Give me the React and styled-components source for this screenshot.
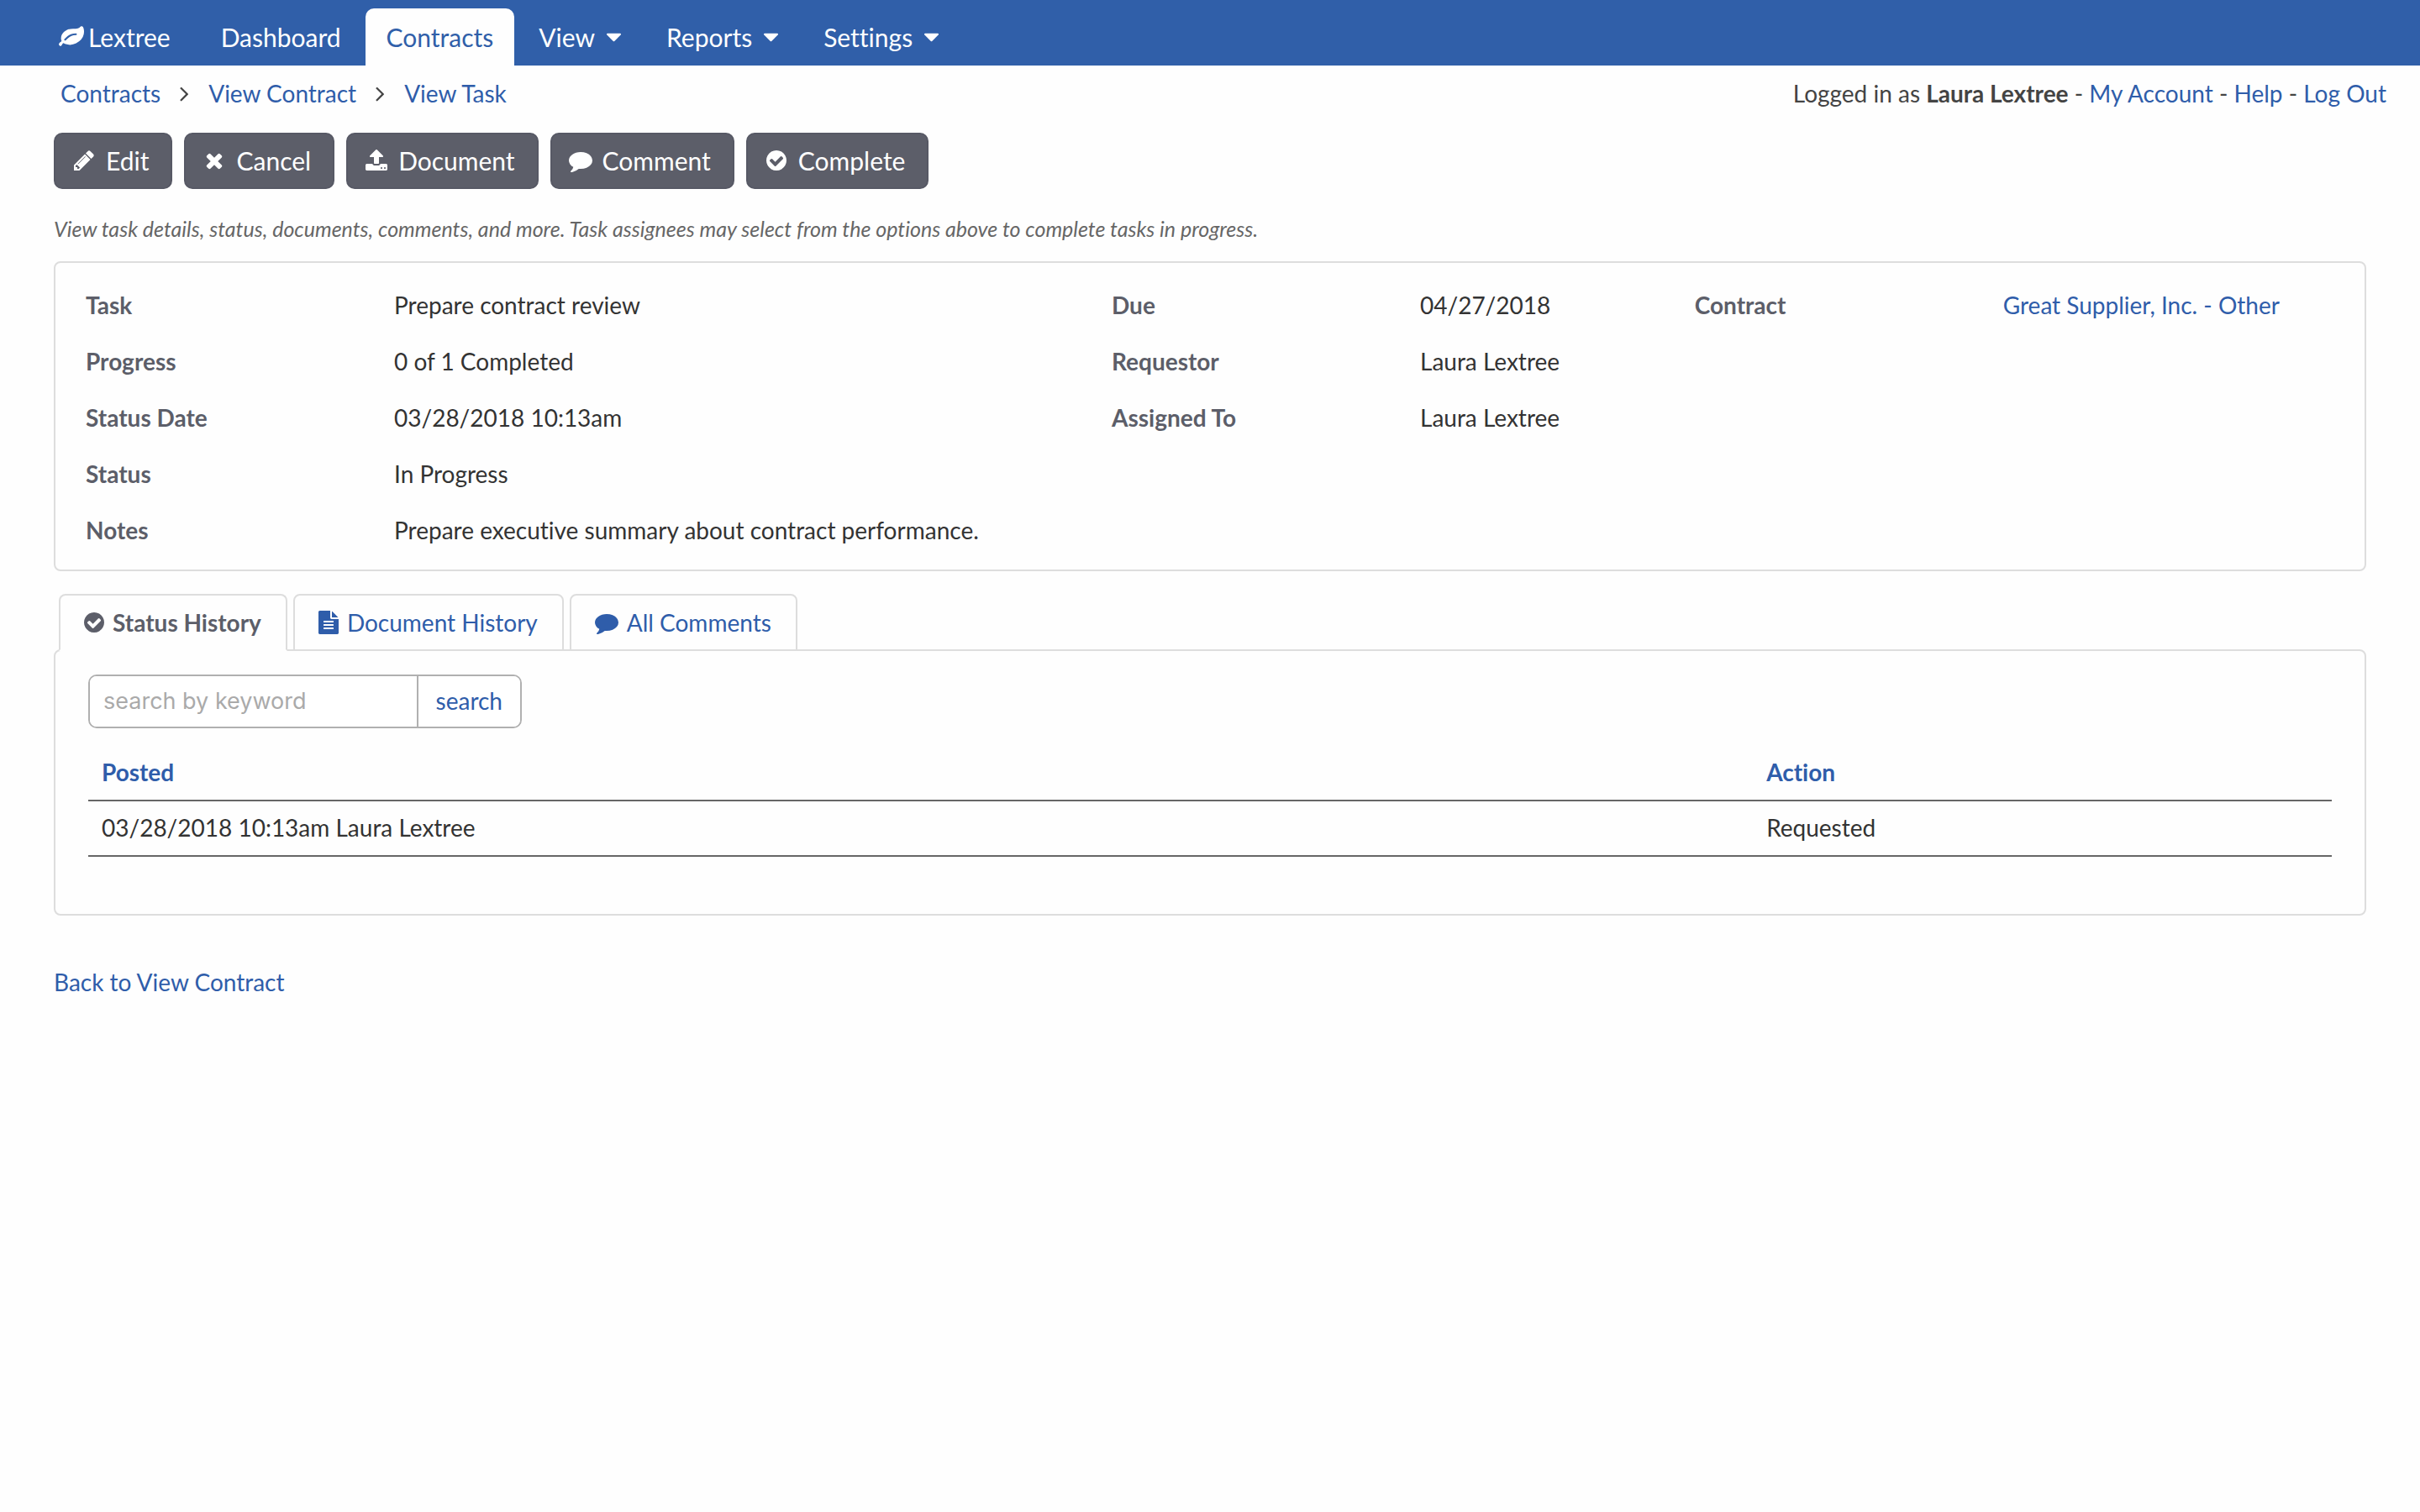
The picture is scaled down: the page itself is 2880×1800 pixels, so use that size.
import React, { useState } from "react";
import styled, { createGlobalStyle, css } from "styled-components";

const GlobalStyle = createGlobalStyle`
  * {
    box-sizing: border-box;
  }

  body {
    margin: 0;
    background: #fefefe;
    color: #333;
    font-family: Lato, "Liberation Sans", sans-serif;
    font-size: 28px;
    line-height: 34px;
    font-variant-ligatures: none;
  }

  button, input {
    font: inherit;
    font-variant-ligatures: none;
  }
`;

// w is the advance width of the glyph on the 1792 unit grid
const icons = {
  leaf: {
    w: 1792,
    d: "M1280 704q0-26-19-45t-45-19q-172 0-318 49.5t-259.5 134-235.5 219.5q-19 21-19 45 0 26 19 45t45 19q24 0 45-19 27-24 74-71t67-66q137-124 268.5-176t313.5-52q26 0 45-19t19-45zm512-198q0 95-20 193-46 224-184.5 383t-357.5 268q-214 108-438 108-148 0-286-47-15-5-88-42t-96-37q-16 0-39.5 32t-45 70-52.5 70-60 32q-43 0-63.5-17.5t-45.5-59.5q-2-4-6-11t-5.5-10-3-9.5-1.5-13.5q0-35 31-73.5t68-65.5 68-56 31-48q0-4-14-38t-16-44q-9-51-9-104 0-115 43.5-220t119-184.5 170.5-139 204-95.5q55-18 145-25.5t179.5-9 178.5-6 163.5-24 113.5-56.5l29.5-29.5 29.5-28 27-20 36.5-16 43.5-4.5q39 0 70.5 46t47.5 112 24 124 8 96z",
  },
  pencil: {
    w: 1536,
    d: "M491 1536l91-91-235-235-91 91v107h128v128h107zm523-928q0-22-22-22-10 0-17 7l-542 542q-7 7-7 17 0 22 22 22 10 0 17-7l542-542q7-7 7-17zm-54-192l416 416-832 832h-416v-416zm683 96q0 53-37 90l-166 166-416-416 166-165q36-38 90-38 53 0 91 38l235 234q37 39 37 91z",
  },
  times: {
    w: 1408,
    d: "M1490 1322q0 40-28 68l-136 136q-28 28-68 28t-68-28l-294-294-294 294q-28 28-68 28t-68-28l-136-136q-28-28-28-68t28-68l294-294-294-294q-28-28-28-68t28-68l136-136q28-28 68-28t68 28l294 294 294-294q28-28 68-28t68 28l136 136q28 28 28 68t-28 68l-294 294 294 294q28 28 28 68z",
  },
  upload: {
    w: 1664,
    d: "M1344 1472q0-26-19-45t-45-19-45 19-19 45 19 45 45 19 45-19 19-45zm256 0q0-26-19-45t-45-19-45 19-19 45 19 45 45 19 45-19 19-45zm128-224v320q0 40-28 68t-68 28h-1472q-40 0-68-28t-28-68v-320q0-40 28-68t68-28h427q21 56 70.5 92t110.5 36h256q61 0 110.5-36t70.5-92h427q40 0 68 28t28 68zm-325-648q-17 40-59 40h-256v448q0 26-19 45t-45 19h-256q-26 0-45-19t-19-45v-448h-256q-42 0-59-40-17-39 14-69l448-448q18-19 45-19t45 19l448 448q31 30 14 69z",
  },
  comment: {
    w: 1792,
    d: "M1792 896q0 174-120 321.5t-326 233-450 85.5q-70 0-145-8-198 175-460 242-49 14-114 22-17 2-30.5-9t-17.5-29v-1q-3-4-.5-12t2-10 4.5-9.5l6-9 7-8.5 8-9q7-8 31-34.5t34.5-38 31-39.5 32.5-51 27-59 26-76q-157-89-247.5-220t-90.5-281q0-130 71-248.5t191-204.5 286-136.5 348-50.5q244 0 450 85.5t326 233 120 321.5z",
  },
  check: {
    w: 1536,
    d: "M1412 734q0-28-18-46l-91-90q-19-19-45-19t-45 19l-408 407-226-226q-19-19-45-19t-45 19l-91 90q-18 18-18 46 0 27 18 45l362 362q19 19 45 19 27 0 46-19l543-543q18-18 18-45zm252 162q0 209-103 385.5t-279.5 279.5-385.5 103-385.5-103-279.5-279.5-103-385.5 103-385.5 279.5-279.5 385.5-103 385.5 103 279.5 279.5 103 385.5z",
  },
  file: {
    w: 1536,
    d: "M1596 476q14 14 28 36h-472v-472q22 14 36 28zm-476 164h544v1056q0 40-28 68t-68 28h-1344q-40 0-68-28t-28-68v-1600q0-40 28-68t68-28h800v544q0 40 28 68t68 28zm160 736v-64q0-14-9-23t-23-9h-704q-14 0-23 9t-9 23v64q0 14 9 23t23 9h704q14 0 23-9t9-23zm0-256v-64q0-14-9-23t-23-9h-704q-14 0-23 9t-9 23v64q0 14 9 23t23 9h704q14 0 23-9t9-23zm0-256v-64q0-14-9-23t-23-9h-704q-14 0-23 9t-9 23v64q0 14 9 23t23 9h704q14 0 23-9t9-23z",
  },
  caret: {
    w: 1024,
    d: "M1408 704q0 26-19 45l-448 448q-19 19-45 19t-45-19l-448-448q-19-19-19-45t19-45 45-19h896q26 0 45 19t19 45z",
  },
  angle: {
    w: 640,
    d: "M1171 960q0 13-10 23l-466 466q-10 10-23 10t-23-10l-50-50q-10-10-10-23t10-23l393-393-393-393q-10-10-10-23t10-23l50-50q10-10 23-10t23 10l466 466q10 10 10 23z",
  },
};

const Svg = styled.svg`
  display: block;
  flex: none;
  overflow: visible;
  fill: currentColor;
`;

function Icon({ name, size = 28, width }) {
  const { w, d } = icons[name];
  return (
    <Svg
      width={width || Math.round((size * w) / 1792)}
      height={size}
      viewBox={`${(1792 - w) / 2} 0 ${w} 1792`}
      aria-hidden="true"
    >
      <path d={d} />
    </Svg>
  );
}

const Link = styled.a`
  color: #2f5daa;
  text-decoration: none;

  &:hover {
    text-decoration: underline;
  }
`;

const Navbar = styled.nav`
  display: flex;
  align-items: flex-end;
  gap: 4px;
  height: 78px;
  padding-left: 45px;
  background: #305fa9;
`;

const navItem = css`
  display: flex;
  align-items: center;
  height: 68px;
  padding: 0 25px;
  border: 0;
  border-radius: 10px 10px 0 0;
  background: ${(p) => (p.$active ? "#fefefe" : "transparent")};
  color: ${(p) => (p.$active ? "#305fa9" : "#fff")};
  font-size: 30px;
  line-height: 36px;
  text-decoration: none;
  cursor: pointer;
`;

const NavLink = styled.a`
  ${navItem}
`;

const NavMenu = styled.button`
  ${navItem}
  gap: 14px;
`;

const Brand = styled.a`
  ${navItem}
  gap: 5px;
  margin-right: 6px;
`;

const TopRow = styled.div`
  display: flex;
  align-items: center;
  justify-content: space-between;
  padding: 16px 40px 0 72px;
  color: #444;
`;

const Breadcrumbs = styled.div`
  display: flex;
  align-items: center;
  gap: 23px;
`;

const Page = styled.main`
  padding: 0 64px;
`;

const Toolbar = styled.div`
  display: flex;
  gap: 14px;
  margin-top: 30px;
`;

const ToolButton = styled.button`
  display: flex;
  align-items: center;
  gap: 8px;
  height: 67px;
  padding: 0 26px 2px 16px;
  border: 2px solid #575965;
  border-radius: 10px;
  background: #5c5e69;
  color: #fff;
  font-size: 30px;
  line-height: 36px;
  cursor: pointer;
`;

const Hint = styled.p`
  margin: 31px 0 23px;
  color: #666;
  font-size: 25px;
  line-height: 32px;
  font-style: italic;
`;

const Card = styled.section`
  border: 2px solid #ddd;
  border-radius: 8px;
`;

const Details = styled(Card)`
  display: grid;
  grid-template-columns: 44fr 25fr 27fr;
  align-items: start;
  padding: 17px 48px 13px 36px;
`;

const Fields = styled.dl`
  display: grid;
  grid-template-columns: 367px 1fr;
  margin: 0;
  line-height: 67px;

  dt {
    color: #5c5e69;
    font-weight: bold;
  }

  dd {
    margin: 0;
  }
`;

const Tabs = styled.div`
  display: flex;
  gap: 7px;
  margin: 27px 0 -2px;
  padding-left: 6px;
`;

const Tab = styled.button`
  display: flex;
  align-items: center;
  gap: 10px;
  height: 68px;
  padding: 0 29px 0 28px;
  border: 2px solid #ddd;
  border-bottom-color: ${(p) => (p.$active ? "#fefefe" : "#ddd")};
  border-radius: 8px 8px 0 0;
  background: #fefefe;
  color: ${(p) => (p.$active ? "#5c5e69" : "#2f5daa")};
  font-weight: ${(p) => (p.$active ? "bold" : "normal")};
  z-index: 1;
  cursor: pointer;
`;

const Panel = styled(Card)`
  padding: 28px 39px 68px;
`;

const SearchForm = styled.form`
  display: flex;
  width: 516px;
  height: 64px;
  border: 2px solid #b0b0b0;
  border-radius: 10px;
  overflow: hidden;
`;

const SearchInput = styled.input`
  flex: 1;
  min-width: 0;
  padding: 0 16px;
  border: 0;
  background: #fff;
  font-family: Inter, "Liberation Sans", sans-serif;
  font-size: 27px;

  &::placeholder {
    color: #aaa;
  }
`;

const SearchButton = styled.button`
  padding: 0 21px 2px;
  border: 0;
  border-left: 2px solid #b0b0b0;
  background: #fff;
  color: #2f5daa;
  cursor: pointer;
`;

const HistoryTable = styled.table`
  width: 100%;
  margin-top: 21px;
  border-spacing: 0;
  table-layout: fixed;

  th, td {
    height: 66px;
    padding: 0 16px 2px;
    border-bottom: 2px solid #666;
    text-align: left;
  }

  th:first-child {
    width: 74.2%;
  }
`;

const BackRow = styled.div`
  margin-top: 62px;
`;

const actions = [
  { icon: "pencil", label: "Edit" },
  { icon: "times", label: "Cancel" },
  { icon: "upload", label: "Document" },
  { icon: "comment", label: "Comment" },
  { icon: "check", label: "Complete" },
];

const tabs = [
  { icon: "check", label: "Status History" },
  { icon: "file", label: "Document History" },
  { icon: "comment", label: "All Comments" },
];

const details = [
  [
    ["Task", "Prepare contract review"],
    ["Progress", "0 of 1 Completed"],
    ["Status Date", "03/28/2018 10:13am"],
    ["Status", "In Progress"],
    ["Notes", "Prepare executive summary about contract performance."],
  ],
  [
    ["Due", "04/27/2018"],
    ["Requestor", "Laura Lextree"],
    ["Assigned To", "Laura Lextree"],
  ],
  [["Contract", <Link href="#supplier">Great Supplier, Inc. - Other</Link>]],
];

function App() {
  const [tab, setTab] = useState("Status History");
  const [keyword, setKeyword] = useState("");

  return (
    <>
      <GlobalStyle />
      <Navbar>
        <Brand href="#home"><Icon name="leaf" size={30} /> Lextree</Brand>
        <NavLink href="#dashboard">Dashboard</NavLink>
        <NavLink href="#contracts" $active>Contracts</NavLink>
        {["View", "Reports", "Settings"].map((label) => (
          <NavMenu type="button" key={label}>
            {label} <Icon name="caret" size={30} />
          </NavMenu>
        ))}
      </Navbar>

      <TopRow>
        <Breadcrumbs>
          <Link href="#contracts">Contracts</Link>
          <Icon name="angle" size={30} />
          <Link href="#contract">View Contract</Link>
          <Icon name="angle" size={30} />
          <Link href="#task">View Task</Link>
        </Breadcrumbs>
        <div>
          Logged in as <strong>Laura Lextree</strong> - <Link href="#account">My Account</Link> -{" "}
          <Link href="#help">Help</Link> - <Link href="#logout">Log Out</Link>
        </div>
      </TopRow>

      <Page>
        <Toolbar>
          {actions.map(({ icon, label }) => (
            <ToolButton type="button" key={label}>
              <Icon name={icon} width={36} /> {label}
            </ToolButton>
          ))}
        </Toolbar>

        <Hint>
          View task details, status, documents, comments, and more. Task assignees may select from
          the options above to complete tasks in progress.
        </Hint>

        <Details>
          {details.map((fields, i) => (
            <Fields key={i}>
              {fields.map(([label, value]) => (
                <React.Fragment key={label}>
                  <dt>{label}</dt>
                  <dd>{value}</dd>
                </React.Fragment>
              ))}
            </Fields>
          ))}
        </Details>

        <Tabs role="tablist">
          {tabs.map(({ icon, label }) => (
            <Tab
              type="button"
              role="tab"
              key={label}
              aria-selected={tab === label}
              $active={tab === label}
              onClick={() => setTab(label)}
            >
              <Icon name={icon} /> {label}
            </Tab>
          ))}
        </Tabs>

        <Panel>
          <SearchForm onSubmit={(e) => e.preventDefault()}>
            <SearchInput
              type="text"
              aria-label="search by keyword"
              placeholder="search by keyword"
              value={keyword}
              onChange={(e) => setKeyword(e.target.value)}
            />
            <SearchButton type="submit">search</SearchButton>
          </SearchForm>

          <HistoryTable>
            <thead>
              <tr>
                <th><Link href="#posted">Posted</Link></th>
                <th><Link href="#action">Action</Link></th>
              </tr>
            </thead>
            <tbody>
              <tr>
                <td>03/28/2018 10:13am Laura Lextree</td>
                <td>Requested</td>
              </tr>
            </tbody>
          </HistoryTable>
        </Panel>

        <BackRow>
          <Link href="#contract">Back to View Contract</Link>
        </BackRow>
      </Page>
    </>
  );
}

export default App;
